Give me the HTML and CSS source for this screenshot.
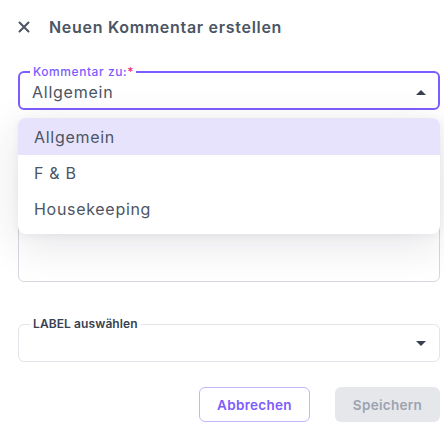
FILE: index.html
```html
<!DOCTYPE html>
<html lang="de">
<head>
<meta charset="utf-8">
<title>Neuen Kommentar erstellen</title>
<link rel="stylesheet" href="styles.css">
</head>
<body>
<div class="dialog">
  <div class="header">
    <svg class="close" width="12" height="12" viewBox="0 0 12 12"><path d="M1.5 1.5L10.5 10.5M10.5 1.5L1.5 10.5" stroke="currentColor" stroke-width="2" stroke-linecap="round"/></svg>
    <h1 class="title">Neuen Kommentar erstellen</h1>
  </div>

  <div class="select-wrap">
    <fieldset class="field field-active">
      <legend class="legend legend-active">Kommentar zu:<span class="req">*</span></legend>
      <div class="field-row field-row-active">
        <span class="value">Allgemein</span>
        <svg class="arrow" width="10" height="5" viewBox="7 10 10 5"><path d="M7 15l5-5 5 5z" fill="currentColor"/></svg>
      </div>
    </fieldset>

    <fieldset class="field field-text">
      <div class="textarea"></div>
    </fieldset>

    <ul class="menu">
      <li class="menu-item selected">Allgemein</li>
      <li class="menu-item">F &amp; B</li>
      <li class="menu-item">Housekeeping</li>
    </ul>
  </div>

  <fieldset class="field field-label">
    <legend class="legend legend-label">LABEL auswählen</legend>
    <div class="field-row field-row-label">
      <span class="value"></span>
      <svg class="arrow" width="10" height="5" viewBox="7 10 10 5"><path d="M7 10l5 5 5-5z" fill="currentColor"/></svg>
    </div>
  </fieldset>

  <div class="actions">
    <button class="btn btn-outline">Abbrechen</button>
    <button class="btn btn-disabled">Speichern</button>
  </div>
</div>
</body>
</html>
```

FILE: styles.css
```css
* { box-sizing: border-box; }
html, body { margin: 0; padding: 0; background: #ffffff; }
body {
  font-family: "Inter", "Open Sans", sans-serif;
  color: #4b5563;
  width: 444px;
  height: 431px;
  overflow: hidden;
}
.dialog {
  padding: 17px 4px 0 18px;
}
.header {
  display: flex;
  align-items: center;
  height: 20px;
}
.close {
  color: #4b5563;
  flex: none;
}
.title {
  margin: 0 0 0 19px;
  font-size: 16px;
  font-weight: 600;
  line-height: 20px;
  color: #4b5563;
  letter-spacing: 0.7px;
}
.select-wrap {
  position: relative;
  margin-top: 28px;
}
.field {
  margin: 0;
  padding: 0 13px;
  border: 1px solid #d5d8de;
  border-radius: 6px;
  min-width: 0;
}
.field-active {
  border: 2px solid #7c5cfc;
  padding: 0 12px;
}
.legend {
  padding: 0 3px;
  margin-left: -2px;
  font-size: 12px;
  line-height: 14px;
  font-weight: 500;
}
.legend-active {
  color: #7c5cfc;
  letter-spacing: 0.55px;
}
.req { color: #ec2f7b; letter-spacing: 0; }
.field-row {
  display: flex;
  align-items: center;
  justify-content: space-between;
  height: 30px;
  padding-bottom: 4px;
}
.field-row-active {
  height: 29px;
  padding-bottom: 3px;
}
.value {
  font-size: 16px;
  line-height: 20px;
  color: #4b5563;
  letter-spacing: 0.75px;
}
.arrow {
  color: #374151;
  flex: none;
}
.field-text {
  margin-top: 16px;
  height: 156px;
  border-color: #d5d8de;
}
.menu {
  position: absolute;
  top: 53px;
  left: 0;
  right: 0;
  margin: 0;
  padding: 0 0 7px;
  list-style: none;
  background: #ffffff;
  border-radius: 8px;
  box-shadow: 0 10px 44px rgba(30, 35, 60, 0.12), 0 2px 8px rgba(30, 35, 60, 0.05);
}
.menu-item {
  height: 36px;
  display: flex;
  align-items: center;
  padding: 0 16px;
  font-size: 16px;
  color: #4b5563;
  letter-spacing: 0.7px;
}
.menu-item.selected {
  background: #e7e3fc;
  border-radius: 8px 8px 0 0;
  height: 37px;
}
.field-label {
  margin-top: 35px;
  border-color: #e1e4e8;
}
.legend-label {
  font-weight: 600;
  color: #374151;
  letter-spacing: 0.1px;
}
.field-row-label {
  padding-bottom: 6px;
}
.actions {
  display: flex;
  justify-content: flex-end;
  gap: 25px;
  margin-top: 25px;
}
.btn {
  height: 35px;
  border-radius: 6px;
  font-family: inherit;
  font-size: 13.5px;
  font-weight: 600;
  padding: 0;
  letter-spacing: 0.3px;
}
.btn-outline {
  width: 111px;
  background: #ffffff;
  border: 1px solid #c4b5fd;
  color: #7c5cfc;
}
.btn-disabled {
  width: 105px;
  background: #e5e7eb;
  border: none;
  color: #9ca3af;
}
```
